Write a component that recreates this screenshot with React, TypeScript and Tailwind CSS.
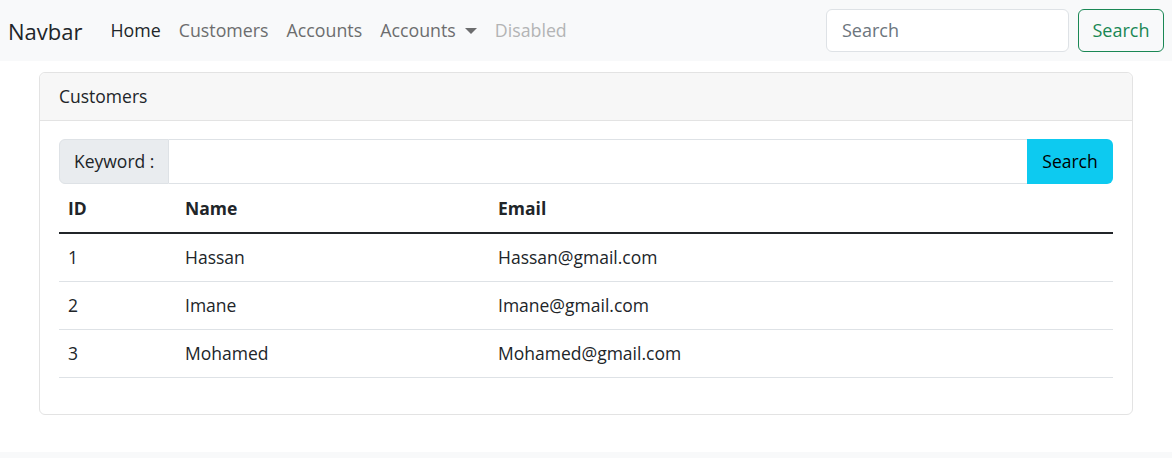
import React from "react";

const rows = [
  { id: 1, name: "Hassan", email: "Hassan@gmail.com" },
  { id: 2, name: "Imane", email: "Imane@gmail.com" },
  { id: 3, name: "Mohamed", email: "Mohamed@gmail.com" },
];

export default function App() {
  return (
    <div
      className="w-[1172px] h-[458px] bg-white text-[#212529] flex flex-col"
      style={{ fontFamily: '"Open Sans", "Noto Sans", sans-serif' }}
    >
      <nav className="h-[61px] bg-[#f8f9fa] flex items-center pl-[8px] pr-[8px] shrink-0">
        <span className="text-[22px] text-[#212529] mr-[19px] leading-none">Navbar</span>
        <div className="flex items-center text-[17.8px]">
          <span className="px-[9px] text-[#212529]">Home</span>
          <span className="px-[9px] text-[#6c6d6e]">Customers</span>
          <span className="px-[9px] text-[#6c6d6e]">Accounts</span>
          <span className="px-[9px] text-[#6c6d6e] flex items-center">
            Accounts
            <span className="ml-[9px] w-0 h-0 border-l-[6px] border-r-[6px] border-t-[6px] border-l-transparent border-r-transparent border-t-[#6c6d6e]" />
          </span>
          <span className="px-[9px] text-[#b3b4b5]">Disabled</span>
        </div>
        <div className="ml-auto flex items-center gap-[9px]">
          <div className="w-[243px] h-[43px] bg-white border border-[#dee2e6] rounded-[6px] flex items-center px-[15px] text-[18px] text-[#6c757d]">
            Search
          </div>
          <div className="w-[86px] h-[43px] border border-[#198754] rounded-[6px] flex items-center justify-center text-[18px] text-[#198754]">
            Search
          </div>
        </div>
      </nav>
      <div className="px-[39px] pt-[11px]">
        <div className="border border-[#e3e3e3] rounded-[6px] h-[343px] flex flex-col">
          <div className="h-[48px] bg-[#f7f7f7] border-b border-[#e3e3e3] rounded-t-[6px] flex items-center px-[19px] text-[17.5px]">
            Customers
          </div>
          <div className="px-[19px] pt-[18px]">
            <div className="flex h-[45px] text-[17.5px]">
              <div className="w-[110px] shrink-0 whitespace-nowrap bg-[#e9ecef] border border-[#dee2e6] rounded-l-[6px] flex items-center pl-[14px]">
                Keyword :
              </div>
              <div className="flex-1 border-y border-[#dee2e6] bg-white" />
              <div className="w-[86px] shrink-0 bg-[#0dcaf0] rounded-r-[6px] flex items-center justify-center text-black">
                Search
              </div>
            </div>
            <table className="w-full text-[17.5px] border-collapse">
              <thead>
                <tr className="h-[49px] border-b-2 border-[#212529]">
                  <th className="w-[117px] text-left font-bold px-[9px]">ID</th>
                  <th className="w-[313px] text-left font-bold px-[9px]">Name</th>
                  <th className="text-left font-bold px-[9px]">Email</th>
                </tr>
              </thead>
              <tbody>
                {rows.map((r) => (
                  <tr key={r.id} className="h-[48px] border-b border-[#dee2e6]">
                    <td className="px-[9px]">{r.id}</td>
                    <td className="px-[9px]">{r.name}</td>
                    <td className="px-[9px]">{r.email}</td>
                  </tr>
                ))}
              </tbody>
            </table>
          </div>
        </div>
      </div>
      <div className="mt-auto h-[6px] bg-[#f8f9fa]" />
    </div>
  );
}
